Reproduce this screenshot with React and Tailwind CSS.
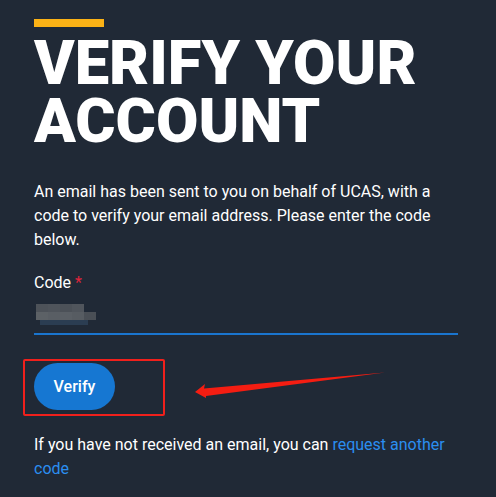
import React from 'react';

const App = () => {
  return (
    <div className="min-h-screen bg-[#202936] font-['Roboto',sans-serif] text-white relative overflow-hidden">
      <div className="pl-[34px] pr-[38px] pt-[19px]">
        <div className="w-[70px] h-2 bg-[#fbb216]" />
        <h1 className="mt-[7px] text-[61.5px] leading-[58px] font-black">
          VERIFY YOUR ACCOUNT
        </h1>

        <p className="mt-[30px] text-[16px] leading-6 text-white">
          An email has been sent to you on behalf of UCAS, with a code to verify your email address. Please enter the code below.
        </p>

        {/* Code field */}
        <div className="mt-[19px]">
          <label className="block text-[16px] leading-6">
            Code <span className="text-[#e0243c]">*</span>
          </label>
          <div className="h-[40px] border-b-2 border-[#1a75cf] relative">
            {/* blurred entry */}
            <div className="absolute left-[2px] top-[9px] flex flex-col">
              <div className="flex">
                <div className="w-[12px] h-[8px] bg-[#4d5259]" />
                <div className="w-[12px] h-[8px] bg-[#4f545b]" />
                <div className="w-[12px] h-[8px] bg-[#4c5158]" />
                <div className="w-[12px] h-[8px] bg-[#50555c]" />
              </div>
              <div className="flex">
                <div className="w-[12px] h-[8px] bg-[#5c6166]" />
                <div className="w-[12px] h-[8px] bg-[#595e64]" />
                <div className="w-[12px] h-[8px] bg-[#5a5f65]" />
                <div className="w-[12px] h-[8px] bg-[#575c62]" />
                <div className="w-[12px] h-[8px] bg-[#4a4f56]" />
              </div>
              <div className="flex ml-[4px]">
                <div className="w-[48px] h-[5px] bg-[#2b3d52]" />
              </div>
            </div>
          </div>
        </div>

        {/* Verify button */}
        <div className="mt-[28px]">
          <button className="w-[81px] h-[47px] rounded-full bg-[#1677d2] text-white text-[16px] font-medium">
            Verify
          </button>
        </div>

        <p className="mt-[23px] text-[16px] leading-6">
          If you have not received an email, you can{' '}
          <a className="text-[#2b8ef0]">request another code</a>
        </p>
      </div>

      {/* annotation box */}
      <div className="absolute left-[23px] top-[359px] w-[142px] h-[57px] border-2 border-[#f0201c] rounded-[2px]" />
      {/* annotation arrow */}
      <svg className="absolute left-[190px] top-[368px]" width="200" height="34" viewBox="190 368 200 34">
        <polygon points="195,392 205,384 204,388.5 385,372.6 206,396 206,398" fill="#f41d12" />
      </svg>
    </div>
  );
};

export default App;
